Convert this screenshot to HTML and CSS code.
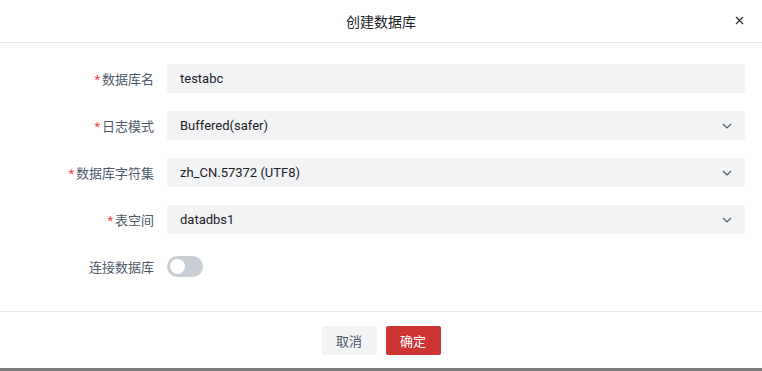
FILE: index.html
```html
<!DOCTYPE html>
<html lang="zh-CN">
<head>
    <meta charset="UTF-8">
    <title>创建数据库</title>
    <link rel="stylesheet" href="styles.css">
</head>
<body>
    <div class="dialog">
        <div class="header">
            <span class="title">创建数据库</span>
            <span class="close">
                <svg width="9" height="9" viewBox="0 0 9 9"><path d="M1 1 L8 8 M8 1 L1 8" stroke="#333" stroke-width="1.3" fill="none"/></svg>
            </span>
        </div>
        <div class="body">
            <div class="row">
                <label class="label"><i>*</i>数据库名</label>
                <div class="field">testabc</div>
            </div>
            <div class="row">
                <label class="label"><i>*</i>日志模式</label>
                <div class="field select">Buffered(safer)<svg class="arrow" width="10" height="6" viewBox="0 0 10 6"><path d="M1 1 L5 5 L9 1" stroke="#4e5969" stroke-width="1.2" fill="none"/></svg></div>
            </div>
            <div class="row">
                <label class="label"><i>*</i>数据库字符集</label>
                <div class="field select">zh_CN.57372 (UTF8)<svg class="arrow" width="10" height="6" viewBox="0 0 10 6"><path d="M1 1 L5 5 L9 1" stroke="#4e5969" stroke-width="1.2" fill="none"/></svg></div>
            </div>
            <div class="row">
                <label class="label"><i>*</i>表空间</label>
                <div class="field select">datadbs1<svg class="arrow" width="10" height="6" viewBox="0 0 10 6"><path d="M1 1 L5 5 L9 1" stroke="#4e5969" stroke-width="1.2" fill="none"/></svg></div>
            </div>
            <div class="row switch-row">
                <label class="label">连接数据库</label>
                <span class="switch"><span class="knob"></span></span>
            </div>
        </div>
        <div class="footer">
            <button class="btn cancel">取消</button>
            <button class="btn ok">确定</button>
        </div>
    </div>
</body>
</html>
```
FILE: styles.css
```css
body {
    margin: 0;
    background: #7b7b7b;
    font-family: Roboto, "Noto Sans CJK SC", sans-serif;
    font-size: 13px;
    color: #1d2129;
}
.dialog {
    background: white;
    width: 762px;
    height: 368px;
    display: flex;
    flex-direction: column;
}
.header {
    height: 42px;
    border-bottom: 1px solid #e5e6eb;
    display: flex;
    align-items: center;
    justify-content: center;
    position: relative;
}
.title {
    font-size: 14px;
    color: #1d2129;
}
.close {
    position: absolute;
    right: 18px;
    top: 16px;
    display: flex;
}
.body {
    padding: 21px 17px 0 0;
    height: 269px;
    box-sizing: border-box;
    border-bottom: 1px solid #e5e6eb;
}
.row {
    display: flex;
    align-items: center;
    margin-bottom: 18px;
}
.switch-row {
    margin-top: 22px;
}
.label {
    width: 154px;
    text-align: right;
    padding-right: 13px;
    color: #4e5969;
    flex: none;
}
.label i {
    color: #f53f3f;
    font-style: normal;
    margin-right: 2px;
}
.field {
    flex: 1;
    height: 29px;
    background: #f2f3f5;
    border-radius: 2px;
    display: flex;
    align-items: center;
    padding: 0 13px;
    justify-content: space-between;
}
.switch {
    width: 36px;
    height: 21px;
    border-radius: 11px;
    background: #c9cdd4;
    position: relative;
}
.knob {
    position: absolute;
    left: 3px;
    top: 3px;
    width: 15px;
    height: 15px;
    border-radius: 50%;
    background: white;
}
.footer {
    display: flex;
    justify-content: center;
    gap: 9px;
    padding-top: 14px;
}
.btn {
    font-family: inherit;
    font-size: 13px;
    height: 29px;
    width: 55px;
    border: none;
    border-radius: 2px;
    cursor: pointer;
}
.cancel {
    background: #f2f3f5;
    color: #4e5969;
}
.ok {
    background: #cf3434;
    color: white;
}
```
